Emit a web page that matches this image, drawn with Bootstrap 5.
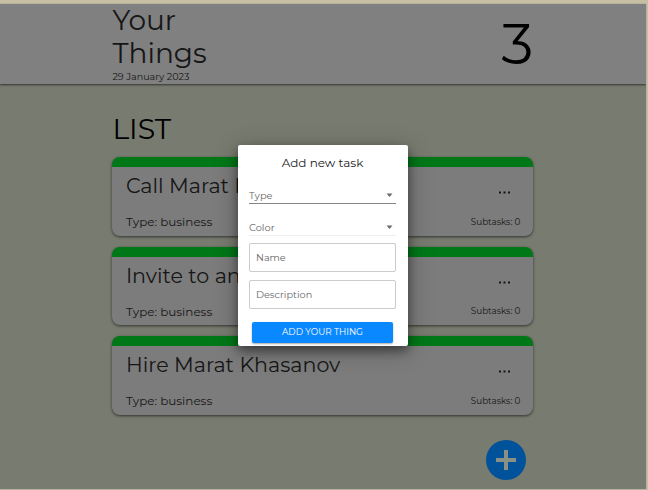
<!DOCTYPE html>
<html lang="en">
<head>
<meta charset="utf-8">
<meta name="viewport" content="width=device-width, initial-scale=1">
<title>Your Things</title>
<link href="https://cdn.jsdelivr.net/npm/bootstrap@5.3.0/dist/css/bootstrap.min.css" rel="stylesheet">
<style>
body{font-family:Montserrat,Inter,sans-serif;background:#c6bfa4;height:490px;overflow:hidden;color:#161616;line-height:1}
.screen{height:485px;width:646px;margin-top:4px;background:#787c70;overflow:hidden;box-shadow:0 0 1px #777}
.topbar{height:80px;background:#808080;box-shadow:0 1px 2px rgba(0,0,0,.6)}
.column{width:421px;margin-left:112.4px}
.brand{font-size:28px;font-weight:400;line-height:33px;width:110px;margin:0}
.brand span{display:block}
.today{font-size:9.6px;line-height:13px}
.total{font-size:57px;font-weight:400;color:#000}
.list-title{font-size:28.4px;font-weight:400;line-height:34px;margin:28px 0 11px;color:#000}
.task-stack{row-gap:11px}
.task{height:78.5px;border-radius:8px;background:#7c7c7c;border-top:10px solid #007818;box-shadow:0 1px 3px rgba(0,0,0,.6);padding:0 13px 0 13.5px}
.task-name{font-size:20.65px;font-weight:400;line-height:24px;margin:0;padding-top:7px;white-space:nowrap}
.task-type{font-size:11.95px;line-height:15px}
.task-sub{font-size:8.8px;line-height:12px}
.dots{width:13px;height:3px;margin:24px 9px 0 0}
.fab{width:40px;height:40px;background:#00529a;margin-top:25.5px;margin-right:7.5px;margin-left:auto}
.dialog-box{position:absolute;left:238px;top:145px;width:170px;height:201px;border-radius:2px;background:#fff;padding:0 12px 0 11px;box-shadow:0 5px 10px rgba(0,0,0,.38),0 4px 24px rgba(0,0,0,.3)}
.dialog-box h2{font-size:12px;font-weight:400;line-height:16px;margin:10px 0 16px;color:#222}
.pick{height:17px;font-size:9.8px;color:#666;border-bottom:1px solid #858585}
.pick span{padding-top:2px}
.pick.faint{border-color:#eee;margin:15px 0 7px}
.entry{height:29px;border:1px solid #cbcbcb;border-radius:2px;padding:0 0 0 6px;font-size:9.7px;color:#666}
.submit{height:21px;margin:13px 3px 0;background:#0a88ff;color:#fff;font-size:8.9px;border-radius:2px;box-shadow:0 1px 2px rgba(0,0,0,.35)}
</style>
</head>
<body>
<div class="screen">
  <header class="topbar position-relative">
    <div class="column d-flex justify-content-between">
      <div>
        <h1 class="brand"><span>Your</span><span>Things</span></h1>
        <div class="today">29 January 2023</div>
      </div>
      <div class="total align-self-center">3</div>
    </div>
  </header>
  <main class="column">
    <h2 class="list-title">LIST</h2>
    <div class="task-stack d-grid">
      <article class="task d-flex justify-content-between">
        <div><h3 class="task-name">Call Marat K</h3><div class="task-type mt-3">Type: business</div></div>
        <div class="d-flex flex-column align-items-end justify-content-between pb-2"><svg class="dots" viewBox="0 0 13 3" fill="#161616"><path d="M1 .5h2v2H1zM5.5 .5h2v2h-2zM10 .5h2v2h-2z"/></svg><div class="task-sub">Subtasks: 0</div></div>
      </article>
      <article class="task d-flex justify-content-between">
        <div><h3 class="task-name">Invite to an</h3><div class="task-type mt-3">Type: business</div></div>
        <div class="d-flex flex-column align-items-end justify-content-between pb-2"><svg class="dots" viewBox="0 0 13 3" fill="#161616"><path d="M1 .5h2v2H1zM5.5 .5h2v2h-2zM10 .5h2v2h-2z"/></svg><div class="task-sub">Subtasks: 0</div></div>
      </article>
      <article class="task d-flex justify-content-between">
        <div><h3 class="task-name">Hire Marat Khasanov</h3><div class="task-type mt-3">Type: business</div></div>
        <div class="d-flex flex-column align-items-end justify-content-between pb-2"><svg class="dots" viewBox="0 0 13 3" fill="#161616"><path d="M1 .5h2v2H1zM5.5 .5h2v2h-2zM10 .5h2v2h-2z"/></svg><div class="task-sub">Subtasks: 0</div></div>
      </article>
    </div>
    <div class="fab rounded-circle d-flex align-items-center justify-content-center">
      <svg width="20" height="20" viewBox="0 0 20 20"><path d="M10 0v20M0 10h20" stroke="#8b9084" stroke-width="4"/></svg>
    </div>
  </main>
</div>
<section class="dialog-box d-flex flex-column" role="dialog">
  <h2 class="text-center">Add new task</h2>
  <div class="pick d-flex align-items-center justify-content-between"><span>Type</span><svg width="13" height="6" viewBox="0 0 13 6"><path d="M3.5 1.5h6L6.5 5z" fill="#6b6b6b"/></svg></div>
  <div class="pick faint d-flex align-items-center justify-content-between"><span>Color</span><svg width="13" height="6" viewBox="0 0 13 6"><path d="M3.5 1.5h6L6.5 5z" fill="#6b6b6b"/></svg></div>
  <div class="entry d-flex align-items-center">Name</div>
  <div class="entry d-flex align-items-center mt-2">Description</div>
  <div class="submit d-flex align-items-center justify-content-center" role="button">ADD YOUR THING</div>
</section>
<script src="https://cdn.jsdelivr.net/npm/bootstrap@5.3.0/dist/js/bootstrap.bundle.min.js"></script>
</body>
</html>
